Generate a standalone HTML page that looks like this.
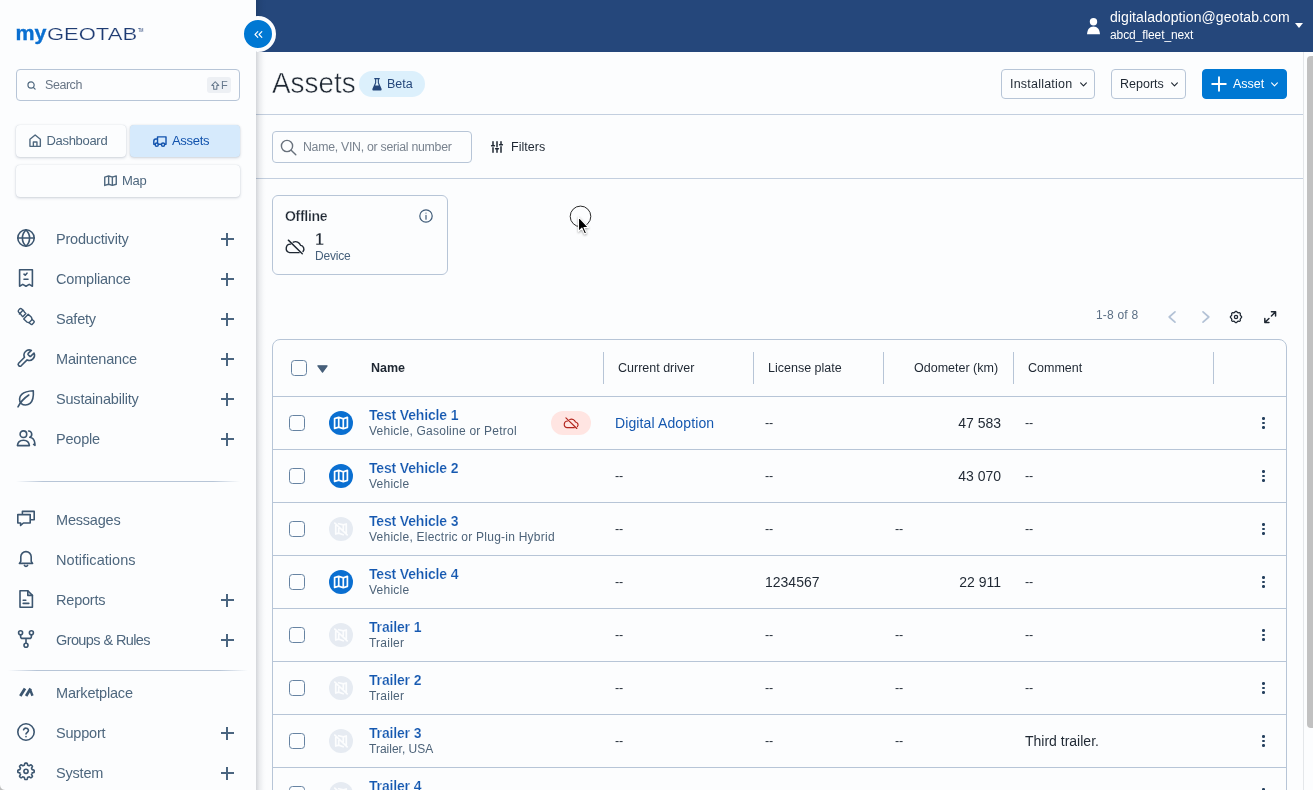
<!DOCTYPE html>
<html lang="en">
<head>
<meta charset="utf-8">
<title>Assets - MyGeotab</title>
<style>
*{box-sizing:border-box;margin:0;padding:0}
html,body{width:1313px;height:790px;overflow:hidden;background:#fcfdfe}
#main,#side,#topbar{will-change:transform}
body{font-family:"Liberation Sans",sans-serif;color:#1f2833;position:relative;font-size:14px}
.abs{position:absolute}
svg{display:block;overflow:visible}
/* header */
#topbar{position:absolute;left:256px;top:0;width:1057px;height:52px;background:#25477b}
#user{position:absolute;left:1110px;top:9px;color:#fff;font-size:14px;line-height:17px;white-space:nowrap;letter-spacing:.08px}
#user .l2{font-size:12px;line-height:17px;letter-spacing:-.1px;position:relative;top:1px}
/* sidebar */
#side{position:absolute;left:0;top:0;width:256px;height:790px;background:#fcfdfe;z-index:5}
#side:after{content:"";position:absolute;left:256px;top:0;width:10px;height:790px;background:linear-gradient(90deg,rgba(10,20,40,.17),rgba(10,20,40,.07) 35%,rgba(10,20,40,.02) 70%,rgba(10,20,40,0))}
#collapse{position:absolute;left:240px;top:16px;width:36px;height:36px;border-radius:50%;background:#0078d3;border:4px solid #fcfdfe;z-index:6;box-sizing:border-box}
.sbox{position:absolute;left:16px;top:69px;width:224px;height:32px;border:1px solid #b7c5d7;border-radius:4px;background:#fcfdfe}
.sbox .ph{position:absolute;left:28px;top:7px;font-size:12.500px;color:#697686;line-height:16px;letter-spacing:-.45px}
.kbd{position:absolute;right:8px;top:7px;width:24px;height:16px;border-radius:3px;background:#edf0f4;color:#66788c;font-size:11px;line-height:16px}
.nbtn{position:absolute;height:32px;border-radius:4px;background:#fcfdfe;box-shadow:0 1px 3px rgba(40,60,90,.22),0 0 1px rgba(40,60,90,.18);color:#4e677e;font-size:13px;line-height:32px;white-space:nowrap;letter-spacing:-.31px}
.nbtn.act{background:#d6eafc;color:#1253ad}
.nbtn span{position:absolute;top:0}
.nbtn svg{position:absolute}
.mi{position:absolute;left:0;width:256px;height:40px}
.mi .t{position:absolute;left:56px;top:11px;font-size:14.5px;line-height:18px;color:#4e677e;white-space:nowrap;letter-spacing:-.2px}
.mi svg.ic{position:absolute;left:16px;top:9.300px;width:20px;height:20px;fill:none;stroke:#3c5670;stroke-width:1.6;stroke-linecap:round;stroke-linejoin:round}
.mi .plus{position:absolute;left:220.500px;top:13.500px;width:13px;height:13px}
.mi .plus:before{content:"";position:absolute;left:0;top:5.900px;width:13px;height:1.200px;background:#4a6580}
.mi .plus:after{content:"";position:absolute;left:5.900px;top:0;width:1.200px;height:13px;background:#4a6580}
.hr{position:absolute;height:1px;background:linear-gradient(90deg,rgba(180,195,214,0),#b7c5d7 12%,#b7c5d7 88%,rgba(180,195,214,0))}
/* main */
#title{position:absolute;left:272px;top:64px;font-size:28.600px;line-height:38px;color:#1f2833;font-weight:400;transform:scaleX(.975);transform-origin:0 0;-webkit-text-stroke:.5px #fcfdfe}
#beta{position:absolute;left:359px;top:71px;width:66px;height:26px;border-radius:13px;background:#dcf0fc;color:#25477b;font-size:12.5px;line-height:26px}
.btn{position:absolute;top:69px;height:30px;border:1px solid #b7c5d7;border-radius:4px;background:#fcfdfe;font-size:12.5px;line-height:28px;color:#1f2833;white-space:nowrap}
.btn.pri{background:#0078d3;border-color:#0078d3;color:#fff}
.btn span{position:absolute;top:0}
.line{position:absolute;left:256px;width:1047px;height:1px;background:#c3cfdf}
#q{position:absolute;left:272px;top:131px;width:200px;height:32px;border:1px solid #b7c5d7;border-radius:4px}
#q span{position:absolute;left:30px;top:7px;font-size:12.300px;line-height:16px;color:#79838f;white-space:nowrap;letter-spacing:-.27px}
#filters{position:absolute;left:511px;top:139px;letter-spacing:.05px;font-size:12.5px;line-height:16px;color:#1f2833;font-weight:400}
#card{position:absolute;left:272px;top:195px;width:176px;height:80px;border:1px solid #b7c5d7;border-radius:6px}
#card .h{position:absolute;left:12px;top:11.800px;font-size:14px;font-weight:700;line-height:16px;color:#1f2833;letter-spacing:-.3px;-webkit-text-stroke:.25px #fcfdfe}
#card .n{position:absolute;left:42px;top:35px;font-size:16px;line-height:18px;color:#1f2833;font-weight:700;-webkit-text-stroke:.35px #fcfdfe}
#card .d{position:absolute;left:42px;top:53px;font-size:12px;line-height:14px;color:#47617c;letter-spacing:-.2px}
#pg{position:absolute;left:1096px;top:308px;font-size:12px;line-height:14px;color:#5b6f85;white-space:nowrap;letter-spacing:.2px}
/* table */
#tbl{position:absolute;left:272px;top:339px;width:1015px;height:461px;border:1px solid #b7c5d7;border-radius:8px 8px 0 0;overflow:hidden}
.th{position:absolute;top:21px;font-size:12.5px;line-height:14px;color:#1f2833;white-space:nowrap}
.vs{position:absolute;top:12px;width:1px;height:32px;background:#b7c5d7}
.row{position:absolute;left:0;width:1013px;height:53px;border-top:1px solid #b7c5d7}
.cb{position:absolute;left:16px;top:18px;width:16px;height:16px;border:1.100px solid #6683a2;border-radius:3.500px;background:#fcfdfe}
.av{position:absolute;left:56px;top:14px;width:24px;height:24px;border-radius:50%;background:#0a6fd1}
.av.off{background:#e6ebf2}
.av svg{position:absolute;left:4px;top:4px;width:16px;height:16px;fill:none;stroke:#fff;stroke-width:1.5;stroke-linejoin:round;stroke-linecap:round}
.nm{position:absolute;left:96px;top:10px;font-size:14px;font-weight:700;line-height:16px;color:#1558b0;white-space:nowrap;letter-spacing:-.16px;-webkit-text-stroke:.2px #fcfdfe}
.sub{position:absolute;left:96px;top:27px;font-size:12px;line-height:14px;color:#4d6379;white-space:nowrap;letter-spacing:.24px}
.c{position:absolute;top:18px;font-size:14px;line-height:16px;color:#1f2833;white-space:nowrap}
.c.lnk{color:#1558b0;letter-spacing:.12px}
.c.dd{letter-spacing:-.25px;font-size:12.500px}
.c.r{text-align:right}
.dots{position:absolute;left:988.800px;top:20.300px;width:4px;height:12px}
.dots i{position:absolute;left:.6px;width:2.700px;height:2.700px;border-radius:50%;background:#25405e}
#sbar{position:absolute;left:1303px;top:52px;width:10px;height:738px;background:#fcfdfe;border-left:1px solid #e4e7ea}
#sbar i{position:absolute;left:3px;top:4px;width:7px;height:672px;border-radius:4px 0 0 4px;background:#c1c1c1}
</style>
</head>
<body>
<div id="topbar"></div>
<div id="main">
<svg class="abs" style="left:1087px;top:17px" width="13" height="18" viewBox="0 0 13 18" fill="#fff"><circle cx="6.500" cy="4.700" r="3.700"/><path d="M0 17.200c.4-4.800 2.600-7.600 6.500-7.600s6.100 2.800 6.500 7.600z"/></svg>
<div id="user">digitaladoption@geotab.com<div class="l2">abcd_fleet_next</div></div>
<svg class="abs" style="left:1295px;top:23px" width="8" height="5" viewBox="0 0 8 5" fill="#fff"><path d="M0 0h8L4 5z"/></svg>
<div id="title">Assets</div>
<div id="beta"><svg class="abs" style="left:13px;top:6.500px" width="10" height="12.500" viewBox="0 0 8 11" fill="#25477b"><path d="M1.600 0h4.800v1H5.700v3.200L8 9.400c.3.700-.1 1.600-1 1.600H1c-.9 0-1.300-.9-1-1.600l2.300-5.200V1H1.600z"/><path d="M3.300 1h1.400v3.500l.9 2H2.400l.9-2z" fill="#dcf0fc"/></svg><span class="abs" style="left:28px;top:0">Beta</span></div>
<div class="btn" style="left:1001px;width:94px"><span style="left:8px;letter-spacing:.22px">Installation</span><svg class="abs" style="left:78px;top:12px" width="7" height="5" viewBox="0 0 7 5" fill="none" stroke="#1f2833" stroke-width="1.1" stroke-linecap="round" stroke-linejoin="round"><path d="M.6 .8l2.900 3 2.900-3"/></svg></div>
<div class="btn" style="left:1111px;width:75px"><span style="left:8px">Reports</span><svg class="abs" style="left:59px;top:12px" width="7" height="5" viewBox="0 0 7 5" fill="none" stroke="#1f2833" stroke-width="1.1" stroke-linecap="round" stroke-linejoin="round"><path d="M.6 .8l2.900 3 2.900-3"/></svg></div>
<div class="btn pri" style="left:1202px;width:85px"><svg class="abs" style="left:7.500px;top:6px" width="16" height="16" viewBox="0 0 16 16" stroke="#fff" stroke-width="1.900" stroke-linecap="round"><path d="M8 1.200v13.600M1.200 8h13.600"/></svg><span style="left:30px">Asset</span><svg class="abs" style="left:68px;top:12px" width="7" height="5" viewBox="0 0 7 5" fill="none" stroke="#fff" stroke-width="1.1" stroke-linecap="round" stroke-linejoin="round"><path d="M.6 .8l2.900 3 2.900-3"/></svg></div>
<div class="line" style="top:114px"></div>
<div id="q"><svg class="abs" style="left:7px;top:7px" width="17" height="17" viewBox="0 0 17 17" fill="none" stroke="#68717c" stroke-width="1.400" stroke-linecap="round"><circle cx="7" cy="7" r="5.600"/><path d="M11.200 11.200l4.600 4.600"/></svg><span>Name, VIN, or serial number</span></div>
<svg class="abs" style="left:491px;top:141px" width="12" height="12" viewBox="0 0 12 12" fill="none" stroke="#1f2833" stroke-width="1.500" stroke-linecap="round"><path d="M2 .8v3M2 6.800v4.400M6 .8v5M6 8.800v2.400M10 .8v2M10 5.800v5.400M.6 4.800h2.800M4.600 7.800h2.800M8.600 3.800h2.800"/></svg>
<div id="filters">Filters</div>
<div class="line" style="top:178px"></div>
<div id="card"><div class="h">Offline</div>
<svg class="abs" style="left:146px;top:13px" width="14" height="14" viewBox="0 0 14 14" fill="none" stroke="#3f5b78" stroke-width="1.200" stroke-linecap="round"><circle cx="7" cy="7" r="6.200"/><path d="M7 6.400v3.800M7 4v.1"/></svg>
<svg class="abs" style="left:12.500px;top:43px" width="19" height="16" viewBox="0 0 20 17" fill="none" stroke="#1f2833" stroke-width="1.500" stroke-linecap="round" stroke-linejoin="round"><path d="M2.400 1.200l14.800 14.400"/><path d="M4.800 5.400a4.600 4.600 0 0 0-1 9.100h10M7.600 3.400a5.600 5.600 0 0 1 7.800 3.400 3.900 3.900 0 0 1 2.600 6.400"/></svg>
<div class="n">1</div><div class="d">Device</div></div>
<svg class="abs" style="left:568px;top:204px;z-index:9" width="26" height="32" viewBox="0 0 26 32"><circle cx="12.500" cy="12.400" r="10.300" fill="none" stroke="#111" stroke-width=".9"/><path d="M10.500 12.800v14.600l3.400-3.200 2.600 5.700 2-.9-2.500-5.500h4.500z" fill="#000" stroke="#fff" stroke-width="1.100" stroke-linejoin="round" style="filter:drop-shadow(0 1px 1px rgba(0,0,0,.35))"/></svg>
<div id="pg">1-8 of 8</div>
<svg class="abs" style="left:1168px;top:311px" width="8" height="12" viewBox="0 0 8 12" fill="none" stroke="#b3c2d6" stroke-width="1.700" stroke-linecap="round" stroke-linejoin="round"><path d="M7 .9L1.200 6 7 11.100"/></svg>
<svg class="abs" style="left:1202px;top:311px" width="8" height="12" viewBox="0 0 8 12" fill="none" stroke="#b3c2d6" stroke-width="1.700" stroke-linecap="round" stroke-linejoin="round"><path d="M1 .9L6.800 6 1 11.100"/></svg>
<svg class="abs" style="left:1229px;top:310px" width="14" height="14" viewBox="0 0 14 14" fill="none" stroke="#1f2833" stroke-width="1.300" stroke-linejoin="round"><circle cx="7" cy="7" r="1.600"/><path d="M7.00 1.43L7.27 1.44L7.55 1.46L7.79 1.67L8.00 1.95L8.19 2.24L8.37 2.47L8.59 2.55L8.81 2.63L9.02 2.72L9.23 2.83L9.52 2.79L9.86 2.72L10.21 2.67L10.53 2.69L10.74 2.87L10.94 3.06L11.13 3.26L11.31 3.47L11.33 3.79L11.28 4.14L11.21 4.48L11.17 4.77L11.28 4.98L11.37 5.19L11.45 5.41L11.53 5.63L11.76 5.81L12.05 6.00L12.33 6.21L12.54 6.45L12.56 6.73L12.57 7.00L12.56 7.27L12.54 7.55L12.33 7.79L12.05 8.00L11.76 8.19L11.53 8.37L11.45 8.59L11.37 8.81L11.28 9.02L11.17 9.23L11.21 9.52L11.28 9.86L11.33 10.21L11.31 10.53L11.13 10.74L10.94 10.94L10.74 11.13L10.53 11.31L10.21 11.33L9.86 11.28L9.52 11.21L9.23 11.17L9.02 11.28L8.81 11.37L8.59 11.45L8.37 11.53L8.19 11.76L8.00 12.05L7.79 12.33L7.55 12.54L7.27 12.56L7.00 12.57L6.73 12.56L6.45 12.54L6.21 12.33L6.00 12.05L5.81 11.76L5.63 11.53L5.41 11.45L5.19 11.37L4.98 11.28L4.77 11.17L4.48 11.21L4.14 11.28L3.79 11.33L3.47 11.31L3.26 11.13L3.06 10.94L2.87 10.74L2.69 10.53L2.67 10.21L2.72 9.86L2.79 9.52L2.83 9.23L2.72 9.02L2.63 8.81L2.55 8.59L2.47 8.37L2.24 8.19L1.95 8.00L1.67 7.79L1.46 7.55L1.44 7.27L1.43 7.00L1.44 6.73L1.46 6.45L1.67 6.21L1.95 6.00L2.24 5.81L2.47 5.63L2.55 5.41L2.63 5.19L2.72 4.98L2.83 4.77L2.79 4.48L2.72 4.14L2.67 3.79L2.69 3.47L2.87 3.26L3.06 3.06L3.26 2.87L3.47 2.69L3.79 2.67L4.14 2.72L4.48 2.79L4.77 2.83L4.98 2.72L5.19 2.63L5.41 2.55L5.63 2.47L5.81 2.24L6.00 1.95L6.21 1.67L6.45 1.46L6.73 1.44z"/></svg>
<svg class="abs" style="left:1264px;top:311px" width="12.400" height="12.400" viewBox="0 0 12 12" fill="none" stroke="#1f2833" stroke-width="1.450" stroke-linecap="round" stroke-linejoin="round"><path d="M7.200 .8h4v4M11.200 .8L7.200 4.800M4.800 11.200h-4v-4M.8 11.200l4-4"/></svg>
<div id="tbl">
<div class="cb" style="left:18px;top:20px"></div><svg class="abs" style="left:44px;top:25px" width="11" height="8" viewBox="0 0 11 8" fill="#465f7a" stroke="#465f7a" stroke-width="1.200" stroke-linejoin="round"><path d="M.9 .8h9.200L5.500 7.200z"/></svg>
<div class="th" style="left:98px;font-weight:700">Name</div><div class="th" style="left:345px">Current driver</div><div class="th" style="left:495px">License plate</div><div class="th" style="left:641px">Odometer (km)</div><div class="th" style="left:755px">Comment</div>
<div class="vs" style="left:330px"></div><div class="vs" style="left:480px"></div><div class="vs" style="left:610px"></div><div class="vs" style="left:740px"></div><div class="vs" style="left:940px"></div>
<div class="row" style="top:56px"><div class="cb"></div><div class="av"><svg viewBox="0 0 14 14"><path d="M1.400 3.200L5 2l4 1.400L12.600 2v8.800L9 12l-4-1.400-3.600 1.200zM5 2v8.600M9 3.400V12"/></svg></div><div class="nm">Test Vehicle 1</div><div class="sub">Vehicle, Gasoline or Petrol</div><div class="abs" style="left:278px;top:14px;width:40px;height:24px;border-radius:12px;background:#ffe5e2"><svg class="abs" style="left:12.500px;top:6px" width="15" height="12.500" viewBox="0 0 20 17" fill="none" stroke="#b3261e" stroke-width="1.600" stroke-linecap="round" stroke-linejoin="round"><path d="M2.400 1.200l14.800 14.400"/><path d="M4.800 5.400a4.600 4.600 0 0 0-1 9.100h10M7.600 3.400a5.600 5.600 0 0 1 7.800 3.400 3.900 3.900 0 0 1 2.600 6.400"/></svg></div><div class="c lnk" style="left:342px">Digital Adoption</div><div class="c dd" style="left:492px">--</div><div class="c r" style="left:622px;width:106px">47 583</div><div class="c dd" style="left:752px">--</div><div class="dots"><i style="top:0"></i><i style="top:4.500px"></i><i style="top:9px"></i></div></div>
<div class="row" style="top:109px"><div class="cb"></div><div class="av"><svg viewBox="0 0 14 14"><path d="M1.400 3.200L5 2l4 1.400L12.600 2v8.800L9 12l-4-1.400-3.600 1.200zM5 2v8.600M9 3.400V12"/></svg></div><div class="nm">Test Vehicle 2</div><div class="sub">Vehicle</div><div class="c dd" style="left:342px">--</div><div class="c dd" style="left:492px">--</div><div class="c r" style="left:622px;width:106px">43 070</div><div class="c dd" style="left:752px">--</div><div class="dots"><i style="top:0"></i><i style="top:4.500px"></i><i style="top:9px"></i></div></div>
<div class="row" style="top:162px"><div class="cb"></div><div class="av off"><svg viewBox="0 0 14 14" style="stroke:#fcfdfe"><path d="M2.400 4v7.400L5 10.600l4 1.400M5 2.400L9 3.400 11.600 2.600v7.800M5 5v5.600M9 3.400v4M1.600 1.800l10.800 10.400"/></svg></div><div class="nm">Test Vehicle 3</div><div class="sub">Vehicle, Electric or Plug-in Hybrid</div><div class="c dd" style="left:342px">--</div><div class="c dd" style="left:492px">--</div><div class="c dd" style="left:622px">--</div><div class="c dd" style="left:752px">--</div><div class="dots"><i style="top:0"></i><i style="top:4.500px"></i><i style="top:9px"></i></div></div>
<div class="row" style="top:215px"><div class="cb"></div><div class="av"><svg viewBox="0 0 14 14"><path d="M1.400 3.200L5 2l4 1.400L12.600 2v8.800L9 12l-4-1.400-3.600 1.200zM5 2v8.600M9 3.400V12"/></svg></div><div class="nm">Test Vehicle 4</div><div class="sub">Vehicle</div><div class="c dd" style="left:342px">--</div><div class="c" style="left:492px">1234567</div><div class="c r" style="left:622px;width:106px">22 911</div><div class="c dd" style="left:752px">--</div><div class="dots"><i style="top:0"></i><i style="top:4.500px"></i><i style="top:9px"></i></div></div>
<div class="row" style="top:268px"><div class="cb"></div><div class="av off"><svg viewBox="0 0 14 14" style="stroke:#fcfdfe"><path d="M2.400 4v7.400L5 10.600l4 1.400M5 2.400L9 3.400 11.600 2.600v7.800M5 5v5.600M9 3.400v4M1.600 1.800l10.800 10.400"/></svg></div><div class="nm">Trailer 1</div><div class="sub">Trailer</div><div class="c dd" style="left:342px">--</div><div class="c dd" style="left:492px">--</div><div class="c dd" style="left:622px">--</div><div class="c dd" style="left:752px">--</div><div class="dots"><i style="top:0"></i><i style="top:4.500px"></i><i style="top:9px"></i></div></div>
<div class="row" style="top:321px"><div class="cb"></div><div class="av off"><svg viewBox="0 0 14 14" style="stroke:#fcfdfe"><path d="M2.400 4v7.400L5 10.600l4 1.400M5 2.400L9 3.400 11.600 2.600v7.800M5 5v5.600M9 3.400v4M1.600 1.800l10.800 10.400"/></svg></div><div class="nm">Trailer 2</div><div class="sub">Trailer</div><div class="c dd" style="left:342px">--</div><div class="c dd" style="left:492px">--</div><div class="c dd" style="left:622px">--</div><div class="c dd" style="left:752px">--</div><div class="dots"><i style="top:0"></i><i style="top:4.500px"></i><i style="top:9px"></i></div></div>
<div class="row" style="top:374px"><div class="cb"></div><div class="av off"><svg viewBox="0 0 14 14" style="stroke:#fcfdfe"><path d="M2.400 4v7.400L5 10.600l4 1.400M5 2.400L9 3.400 11.600 2.600v7.800M5 5v5.600M9 3.400v4M1.600 1.800l10.800 10.400"/></svg></div><div class="nm">Trailer 3</div><div class="sub" style="letter-spacing:0">Trailer, USA</div><div class="c dd" style="left:342px">--</div><div class="c dd" style="left:492px">--</div><div class="c dd" style="left:622px">--</div><div class="c" style="left:752px">Third trailer.</div><div class="dots"><i style="top:0"></i><i style="top:4.500px"></i><i style="top:9px"></i></div></div>
<div class="row" style="top:427px"><div class="cb"></div><div class="av off"><svg viewBox="0 0 14 14" style="stroke:#fcfdfe"><path d="M2.400 4v7.400L5 10.600l4 1.400M5 2.400L9 3.400 11.600 2.600v7.800M5 5v5.600M9 3.400v4M1.600 1.800l10.800 10.400"/></svg></div><div class="nm">Trailer 4</div><div class="sub">Trailer</div><div class="c dd" style="left:342px">--</div><div class="c dd" style="left:492px">--</div><div class="c dd" style="left:622px">--</div><div class="c dd" style="left:752px">--</div><div class="dots"><i style="top:0"></i><i style="top:4.500px"></i><i style="top:9px"></i></div></div>
</div>
</div>
<div id="side">
<svg class="abs" style="left:16px;top:20px" width="132" height="30" viewBox="0 0 132 30">
<text x="-.6" y="20" font-family="Liberation Sans, sans-serif" font-weight="700" font-size="20.500" fill="#0a6fd1" stroke="#0a6fd1" stroke-width=".35" textLength="31" lengthAdjust="spacingAndGlyphs">my</text>
<text x="30.900" y="20" font-family="Liberation Sans, sans-serif" font-weight="400" font-size="15.900" fill="#1f3c73" stroke="#fcfdfe" stroke-width=".2" paint-order="fill stroke" textLength="90.200" lengthAdjust="spacingAndGlyphs">GEOTAB</text>
<text x="122" y="12" font-family="Liberation Sans, sans-serif" font-size="4.500" fill="#1f3c73" textLength="5.500" lengthAdjust="spacingAndGlyphs">TM</text>
</svg>
<div class="sbox">
<svg class="abs" style="left:10px;top:10.500px" width="9.500" height="9.500" viewBox="0 0 11 11" fill="none" stroke="#4e677e" stroke-width="1.400" stroke-linecap="round"><circle cx="4.7" cy="4.7" r="3.6"/><path d="M7.6 7.6l1.8 1.8"/></svg>
<div class="ph">Search</div>
<div class="kbd"><svg class="abs" style="left:4px;top:3.500px" width="8.500" height="9.500" viewBox="0 0 8 9" fill="none" stroke="#66788c" stroke-width="1" stroke-linejoin="round"><path d="M4 .7L.7 4.2h1.8v3.6h3V4.2h1.8z"/></svg><span class="abs" style="left:14px;top:0">F</span></div>
</div>
<div class="nbtn" style="left:16px;top:125px;width:110px">
<svg style="left:13px;top:9px" width="12.300" height="13.300" viewBox="0 0 13 14" fill="none" stroke="#4e677e" stroke-width="1.450" stroke-linejoin="round" stroke-linecap="round"><path d="M1 5.6L6.5 1 12 5.6V13H1z"/><path d="M4.6 13V8.4h3.8V13"/></svg>
<span style="left:30.500px">Dashboard</span></div>
<div class="nbtn act" style="left:130px;top:125px;width:110px">
<svg style="left:23px;top:10.500px" width="13.800" height="11" viewBox="0 0 14 11" fill="none" stroke="#1253ad" stroke-width="1.450" stroke-linejoin="round" stroke-linecap="round"><path d="M4.600 6.500V.8h8.600v7.400h-1.400M8.600 8.200H5.400M4.600 3H2.800C1.500 3 .8 4.300.8 5.600v2.600h1.400"/><circle cx="3.800" cy="8.700" r="1.600"/><circle cx="10.200" cy="8.700" r="1.600"/></svg>
<span style="left:42px">Assets</span></div>
<div class="nbtn" style="left:16px;top:165px;width:224px">
<svg style="left:87.500px;top:10.400px" width="13" height="11.200" viewBox="0 0 14 12" fill="none" stroke="#4e677e" stroke-width="1.500" stroke-linejoin="round" stroke-linecap="round"><path d="M.8 2.2L5 .9l4 1.3L13.2.9v9L9 11.2 5 9.9.8 11.2zM5 .9v9M9 2.2v9"/></svg>
<span style="left:106px">Map</span></div>
<div class="mi" style="top:219px"><svg class="ic" viewBox="0 0 20 20"><circle cx="10" cy="10" r="8.2"/><path d="M1.8 10h16.4M10 1.8c-2.6 2.4-3.6 5-3.6 8.2s1 5.800 3.600 8.200M10 1.800c2.600 2.400 3.600 5 3.600 8.200s-1 5.800-3.600 8.200"/></svg><div class="t">Productivity</div><div class="plus"></div></div>
<div class="mi" style="top:259px"><svg class="ic" viewBox="0 0 20 20"><path d="M3.600 1.800h12.800v16.400l-3.200-1.800-3.200 1.800-3.200-1.800-3.200 1.800z"/><path d="M8 6.200l1.200 1 1.800-2M8 11.200h4"/></svg><div class="t">Compliance</div><div class="plus"></div></div>
<div class="mi" style="top:299px"><svg class="ic" viewBox="0 0 20 20"><g transform="translate(10.100 8.800) rotate(43)" stroke-width="1.400"><path d="M-10 -1.200a1.500 1.500 0 0 1 1.500-1.500h2.600c.7 0 1 .5 1.700.5h1.800v4.400h-1.800c-.7 0-1-.5-1.700-.5h-2.600a1.500 1.500 0 0 1-1.500-1.500z"/><path d="M-6.800 -2.600v5.200"/><path d="M-.2 -3.300h4.400l2 1.100h2.400a1 1 0 0 1 1 1v2.400a1 1 0 0 1-1 1H6.200l-2 1.100H-.2z"/><path d="M6.200 -2.200v4.400"/></g></svg><div class="t">Safety</div><div class="plus"></div></div>
<div class="mi" style="top:339px"><svg class="ic" viewBox="0 0 20 20"><path d="M12.200 5.400a1 1 0 0 0 0 1.300l1.400 1.400a1 1 0 0 0 1.300 0l3.100-3.100a5.200 5.200 0 0 1-6.900 6.900l-5.900 5.900a1.850 1.850 0 0 1-2.600-2.600l5.900-5.900a5.200 5.200 0 0 1 6.900-6.900z"/></svg><div class="t">Maintenance</div><div class="plus"></div></div>
<div class="mi" style="top:379px"><svg class="ic" viewBox="0 0 20 20"><path d="M17.300 2.800c.4 5.400-.2 10-3.200 12.600-2.600 2.200-6.600 2-8.800.2-2.600-2.400-2.200-6.800.4-9.200 2.800-2.600 7.200-3.400 11.600-3.600z"/><path d="M2 18.800c2.400-4.800 6.400-8.800 10.800-11.800"/></svg><div class="t">Sustainability</div><div class="plus"></div></div>
<div class="mi" style="top:419px"><svg class="ic" viewBox="0 0 20 20"><path d="M1.400 17.600c.3-3.400 2.600-5.400 6-5.400s5.700 2 6 5.400z"/><circle cx="7.400" cy="6.200" r="3.300"/><path d="M12.600 3a3.300 3.300 0 0 1 1.200 6.300c2.800.5 4.600 2.500 5 5.700l.2 2.400M19 17.400l-1.400-1"/></svg><div class="t">People</div><div class="plus"></div></div>
<div class="mi" style="top:500px"><svg class="ic" viewBox="0 0 20 20"><path d="M6.400 4.600V2.400h11.800v8.400h-3"/><path d="M1.800 5.600h12.400v8.400H7.400l-2.800 2.400v-2.400H1.800z"/></svg><div class="t">Messages</div></div>
<div class="mi" style="top:540px"><svg class="ic" viewBox="0 0 20 20"><path d="M4.800 12.400V7.800a5.200 5.200 0 0 1 10.400 0v4.600l1.400 2H3.400z"/><path d="M8.400 16.400a1.800 1.800 0 0 0 3.200 0"/></svg><div class="t" style="letter-spacing:.05px">Notifications</div></div>
<div class="mi" style="top:580px"><svg class="ic" viewBox="0 0 20 20"><path d="M11.800 1.800H4v16.400h12.400V6.400z"/><path d="M11.800 1.800v4.600h4.600M7.200 11.200h2.600M7.200 14.400h5.600"/></svg><div class="t">Reports</div><div class="plus"></div></div>
<div class="mi" style="top:620px"><svg class="ic" viewBox="0 0 20 20"><circle cx="4.600" cy="3.800" r="2"/><circle cx="15.400" cy="3.800" r="2"/><circle cx="10" cy="16.200" r="2"/><path d="M4.600 5.800v1.600a2 2 0 0 0 2 2h6.800a2 2 0 0 0 2-2V5.800M10 9.400v4.800"/></svg><div class="t" style="letter-spacing:-.6px">Groups &amp; Rules</div><div class="plus"></div></div>
<div class="mi" style="top:673px"><svg class="ic" viewBox="0 0 20 20"><path d="M4.300 14L9 6.400M10.100 14l4.500-7.400" stroke-width="2.800" stroke-linecap="butt"/><path d="M14.100 7.600l2.400 6.200" stroke-width="2.400" stroke-linecap="butt"/></svg><div class="t">Marketplace</div></div>
<div class="mi" style="top:713px"><svg class="ic" viewBox="0 0 20 20"><circle cx="10" cy="10" r="8.200"/><path d="M7.600 7.800a2.500 2.500 0 0 1 4.850.8c0 1.650-2.450 2.200-2.450 3.400"/><path d="M10 14.600v.1"/></svg><div class="t">Support</div><div class="plus"></div></div>
<div class="mi" style="top:753px"><svg class="ic" viewBox="0 0 20 20"><circle cx="10" cy="9.300" r="2.100"/><path d="M10.00 1.10L10.32 1.11L10.64 1.13L10.96 1.16L11.24 1.50L11.41 2.19L11.54 2.88L11.71 3.24L11.95 3.31L12.18 3.39L12.41 3.48L12.64 3.58L12.86 3.69L13.08 3.80L13.45 3.67L14.03 3.27L14.64 2.91L15.08 2.86L15.33 3.06L15.57 3.28L15.80 3.50L16.02 3.73L16.24 3.97L16.44 4.22L16.39 4.66L16.03 5.27L15.63 5.85L15.50 6.22L15.61 6.44L15.72 6.66L15.82 6.89L15.91 7.12L15.99 7.35L16.06 7.59L16.42 7.76L17.11 7.89L17.80 8.06L18.14 8.34L18.17 8.66L18.19 8.98L18.20 9.30L18.19 9.62L18.17 9.94L18.14 10.26L17.80 10.54L17.11 10.71L16.42 10.84L16.06 11.01L15.99 11.25L15.91 11.48L15.82 11.71L15.72 11.94L15.61 12.16L15.50 12.38L15.63 12.75L16.03 13.33L16.39 13.94L16.44 14.38L16.24 14.63L16.02 14.87L15.80 15.10L15.57 15.32L15.33 15.54L15.08 15.74L14.64 15.69L14.03 15.33L13.45 14.93L13.08 14.80L12.86 14.91L12.64 15.02L12.41 15.12L12.18 15.21L11.95 15.29L11.71 15.36L11.54 15.72L11.41 16.41L11.24 17.10L10.96 17.44L10.64 17.47L10.32 17.49L10.00 17.50L9.68 17.49L9.36 17.47L9.04 17.44L8.76 17.10L8.59 16.41L8.46 15.72L8.29 15.36L8.05 15.29L7.82 15.21L7.59 15.12L7.36 15.02L7.14 14.91L6.92 14.80L6.55 14.93L5.97 15.33L5.36 15.69L4.92 15.74L4.67 15.54L4.43 15.32L4.20 15.10L3.98 14.87L3.76 14.63L3.56 14.38L3.61 13.94L3.97 13.33L4.37 12.75L4.50 12.38L4.39 12.16L4.28 11.94L4.18 11.71L4.09 11.48L4.01 11.25L3.94 11.01L3.58 10.84L2.89 10.71L2.20 10.54L1.86 10.26L1.83 9.94L1.81 9.62L1.80 9.30L1.81 8.98L1.83 8.66L1.86 8.34L2.20 8.06L2.89 7.89L3.58 7.76L3.94 7.59L4.01 7.35L4.09 7.12L4.18 6.89L4.28 6.66L4.39 6.44L4.50 6.22L4.37 5.85L3.97 5.27L3.61 4.66L3.56 4.22L3.76 3.97L3.98 3.73L4.20 3.50L4.43 3.28L4.67 3.06L4.92 2.86L5.36 2.91L5.97 3.27L6.55 3.67L6.92 3.80L7.14 3.69L7.36 3.58L7.59 3.48L7.82 3.39L8.05 3.31L8.29 3.24L8.46 2.88L8.59 2.19L8.76 1.50L9.04 1.16L9.36 1.13L9.68 1.11z"/></svg><div class="t">System</div><div class="plus"></div></div>
<div class="hr" style="left:16px;top:481px;width:224px"></div><div class="hr" style="left:8px;top:670px;width:240px"></div>
</div>
<div id="collapse"><svg class="abs" style="left:9.600px;top:10.600px" width="9" height="7" viewBox="0 0 10 8" fill="none" stroke="#fff" stroke-width="1.3" stroke-linecap="round" stroke-linejoin="round"><path d="M4.200 .8L1 4l3.200 3.200M8.800 .8L5.600 4l3.200 3.200"/></svg></div>
<div class="abs" style="left:0;top:785px;width:5px;height:5px;z-index:8;background:radial-gradient(circle at 100% 0,rgba(0,0,0,0) 4.400px,#bdbdbd 5.400px)"></div>
<div id="sbar"><i></i></div>
</body>
</html>
